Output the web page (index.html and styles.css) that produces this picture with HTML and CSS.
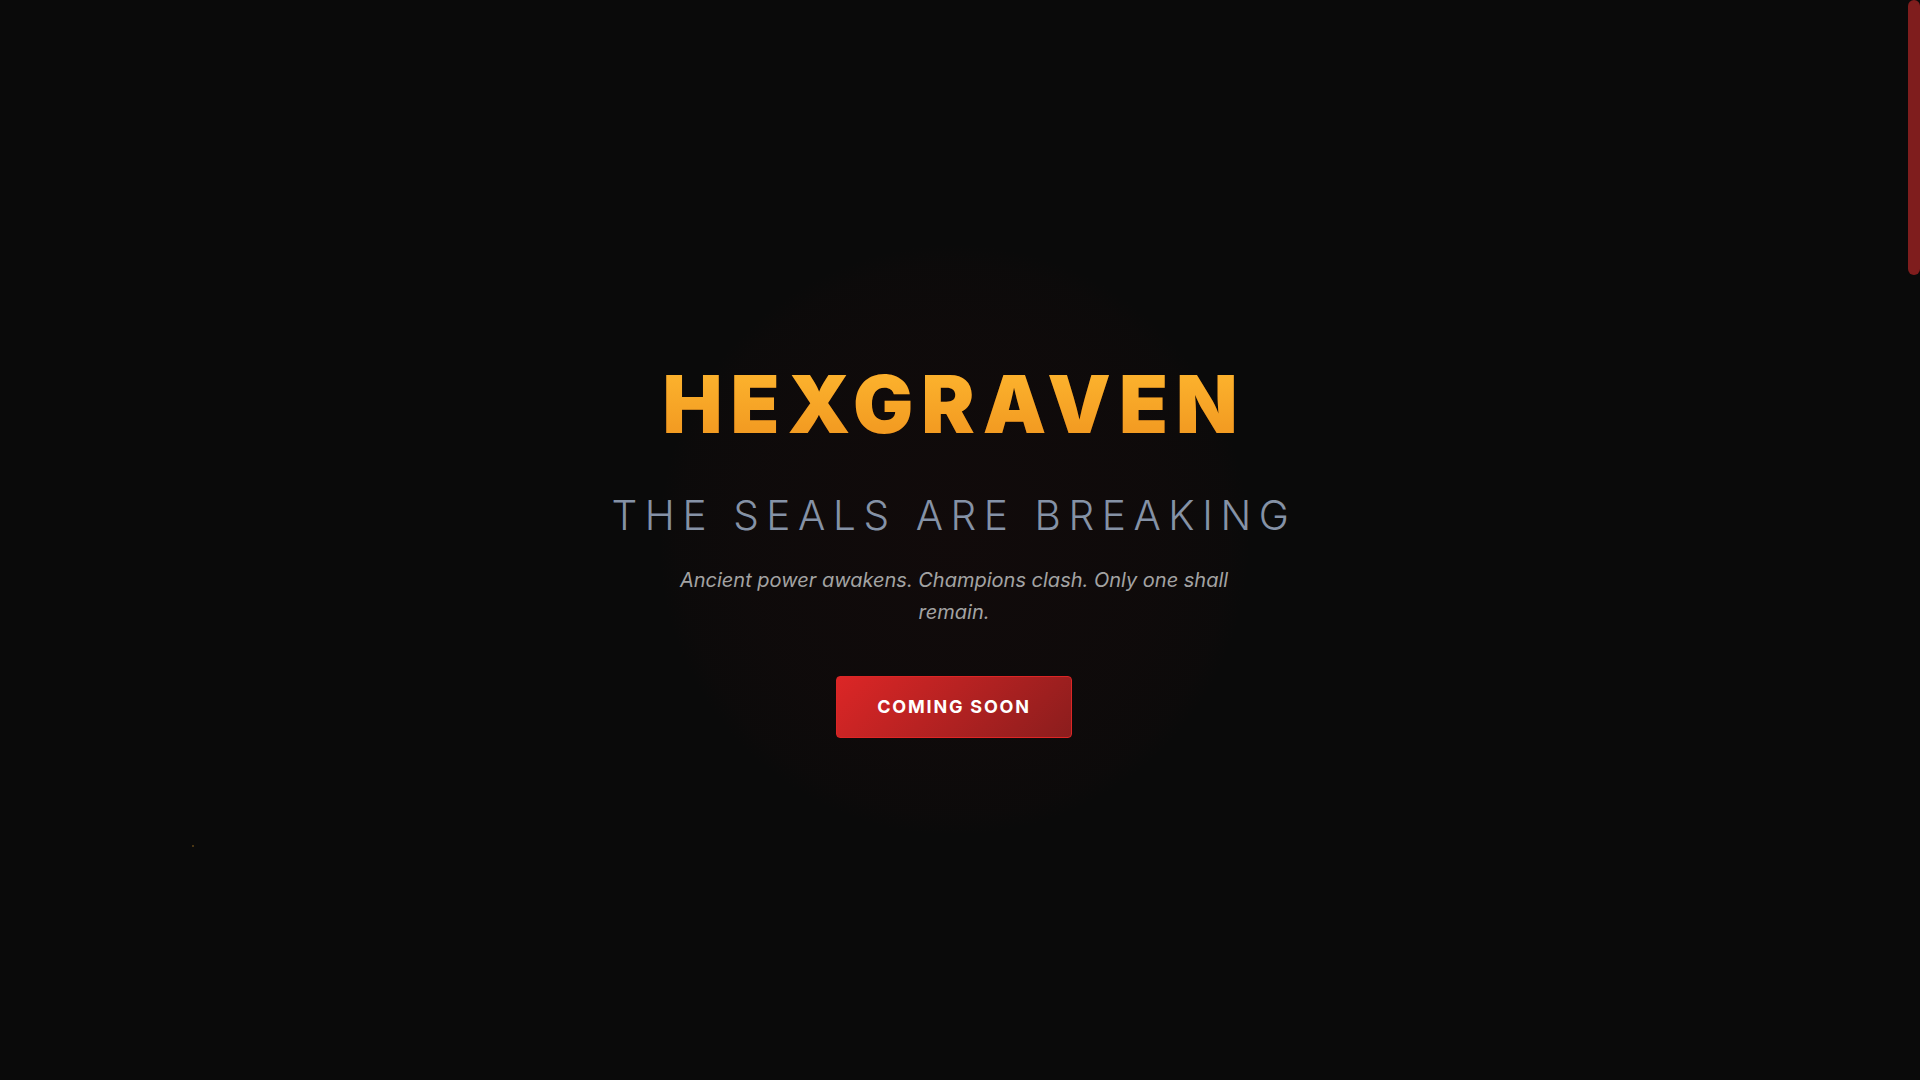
FILE: index.html
```html
<!DOCTYPE html>
<html lang="en">
<head>
<meta charset="utf-8">
<title>Hexgraven</title>
<link rel="stylesheet" href="styles.css">
</head>
<body>
<div class="scroll-thumb"></div>
<main class="page">
  <section class="hero">
    <div class="glow"></div>
    <span class="ember"></span>
    <div class="hero-content">
      <h1 class="title">HEXGRAVEN</h1>
      <h2 class="subtitle">THE SEALS ARE BREAKING</h2>
      <p class="tagline">Ancient power awakens. Champions clash. Only one shall remain.</p>
      <a class="cta" href="#">COMING SOON</a>
    </div>
  </section>
  <section class="below"></section>
</main>
</body>
</html>
```

FILE: styles.css
```css
html, body {
  margin: 0;
  padding: 0;
  background: #0a0a0a;
}
body {
  font-family: Inter, "Noto Sans", sans-serif;
  color: #e5e5e5;
}
::-webkit-scrollbar {
  width: 12px;
}
::-webkit-scrollbar-track {
  background: #0a0a0a;
}
::-webkit-scrollbar-thumb {
  background: #7f1d1d;
  border-radius: 6px;
}
.scroll-thumb {
  position: fixed;
  top: 0;
  right: 0;
  width: 12px;
  height: 275px;
  border-radius: 6px;
  background: #7f1d1d;
  z-index: 10;
}
.page {
  padding-right: 12px;
  background: #0a0a0a;
}
.hero {
  position: relative;
  height: 100vh;
  display: flex;
  align-items: center;
  justify-content: center;
  overflow: hidden;
}
.glow {
  position: absolute;
  left: 50%;
  top: 50%;
  width: 590px;
  height: 590px;
  transform: translate(-50%, -50%);
  border-radius: 50%;
  background: radial-gradient(circle, rgba(130, 20, 20, 0.06) 0%, rgba(120, 20, 20, 0.04) 50%, rgba(100, 20, 20, 0.025) 66%, transparent 71%);
}
.ember {
  position: absolute;
  left: 192px;
  top: 845px;
  width: 2px;
  height: 2px;
  border-radius: 50%;
  background: rgba(200, 140, 40, 0.45);
}
.hero-content {
  position: relative;
  display: flex;
  flex-direction: column;
  align-items: center;
  text-align: center;
}
.title {
  margin: 0;
  font-size: 80px;
  font-weight: 900;
  line-height: 124px;
  letter-spacing: 0.1em;
  background: linear-gradient(180deg, #fbb02c 30%, #f39c22 70%);
  -webkit-background-clip: text;
  background-clip: text;
  color: transparent;
  filter: drop-shadow(0 0 0.6px rgba(110, 50, 5, 0.9));
}
.subtitle {
  margin: 26px 0 0;
  font-size: 40.5px;
  font-weight: 300;
  line-height: 48px;
  letter-spacing: 0.188em;
  color: #8592a6;
}
.tagline {
  margin: 24px 0 0;
  max-width: 600px;
  font-size: 20px;
  font-style: italic;
  line-height: 32px;
  color: #a3a3a3;
}
.cta {
  margin-top: 48px;
  display: inline-block;
  padding: 19px 40px;
  border: 1px solid #dc2626;
  border-radius: 4px;
  background: linear-gradient(135deg, #dc2626 0%, #8b1d1d 100%);
  color: #ffffff;
  font-size: 18px;
  font-weight: 700;
  letter-spacing: 0.1em;
  line-height: 22px;
  text-decoration: none;
}
.below {
  height: 3160px;
  background: #0a0a0a;
}
```
